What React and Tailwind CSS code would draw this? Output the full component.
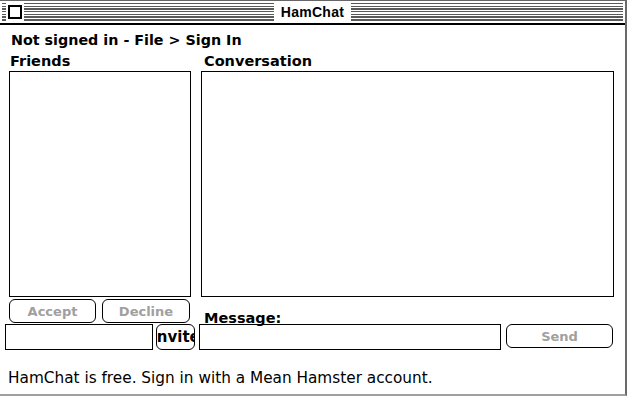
const stripes =
  'bg-[repeating-linear-gradient(to_bottom,#5a5a5a_0px,#5a5a5a_1.4px,#ffffff_1.4px,#ffffff_2.7px)]';

function TitleBar() {
  return (
    <div className="h-[25px] border-t border-[#666] border-b-2 border-b-black flex items-start pt-[2px] pl-[2px] pr-[2px]">
      <div className="h-[18px] w-full flex">
        <div className="flex-1 h-full flex">
          <div className={`w-[4px] h-full ${stripes}`} />
          <div className="w-[18px] h-full flex items-center justify-center bg-white">
            <div className="w-[14px] h-[14px] border-2 border-black bg-white" />
          </div>
          <div className={`flex-1 h-full ${stripes}`} />
        </div>
        <div className="px-[7px] h-full flex items-center bg-white font-bold text-[14px] leading-none tracking-[0.3px]">
          HamChat
        </div>
        <div className={`flex-1 h-full ${stripes}`} />
      </div>
    </div>
  );
}

function MacButton({ children, className = '', disabled }) {
  return (
    <div
      className={`border-[1.5px] border-black rounded-[6px] flex items-center justify-center overflow-hidden whitespace-nowrap font-bold leading-none font-['DejaVu_Sans',sans-serif] ${
        disabled ? 'text-[#a0a0a0]' : 'text-black'
      } ${className}`}
    >
      {children}
    </div>
  );
}

export default function App() {
  return (
    <div className="w-[627px] h-[396px] bg-white overflow-hidden border-r-2 border-r-[#6a6a6a] border-b-2 border-b-[#a0a0a0] font-['Liberation_Sans',sans-serif] text-black">
      <TitleBar />

      <div className="pl-[11px] pt-[7px] h-[23px] font-bold text-[14.3px] leading-[16px] font-['DejaVu_Sans',sans-serif]">
        Not signed in - File &gt; Sign In
      </div>

      <div className="pl-[9px] flex gap-[10px] font-['DejaVu_Sans',sans-serif]">
        <div className="w-[182px] flex flex-col">
          <div className="h-[16px] mt-[5px] pl-[1px] font-bold text-[14.5px] leading-[16px]">Friends</div>
          <div className="mt-[2px] h-[226px] border-[1.5px] border-black" />
          <div className="mt-[2px] h-[24px] flex gap-[6px]">
            <MacButton disabled className="w-[87px] text-[13px]">Accept</MacButton>
            <MacButton disabled className="w-[88px] text-[13px]">Decline</MacButton>
          </div>
        </div>
        <div className="w-[413px] flex flex-col">
          <div className="h-[16px] mt-[5px] pl-[3px] font-bold text-[14.5px] leading-[16px]">Conversation</div>
          <div className="mt-[2px] h-[226px] border-[1.5px] border-black" />
          <div className="mt-[2px] h-[24px] flex items-end pl-[3px]">
            <span className="font-bold text-[14.5px] leading-[14px] translate-y-[2px]">Message:</span>
          </div>
        </div>
      </div>

      <div className="mt-[1px] pl-[5px] flex items-start h-[26px]">
        <div className="w-[148px] h-[26px] border-[1.5px] border-black" />
        <MacButton className="ml-[3px] w-[39px] h-[26px] text-[15px]">Invite</MacButton>
        <div className="ml-[4px] w-[302px] h-[26px] border-[1.5px] border-black" />
        <MacButton disabled className="ml-[5px] w-[107px] h-[24px] text-[13px]">Send</MacButton>
      </div>

      <div className="mt-[20px] pl-[8px] h-[16px] text-[15.3px] leading-[16px] font-['DejaVu_Sans',sans-serif]">
        HamChat is free. Sign in with a Mean Hamster account.
      </div>
    </div>
  );
}
